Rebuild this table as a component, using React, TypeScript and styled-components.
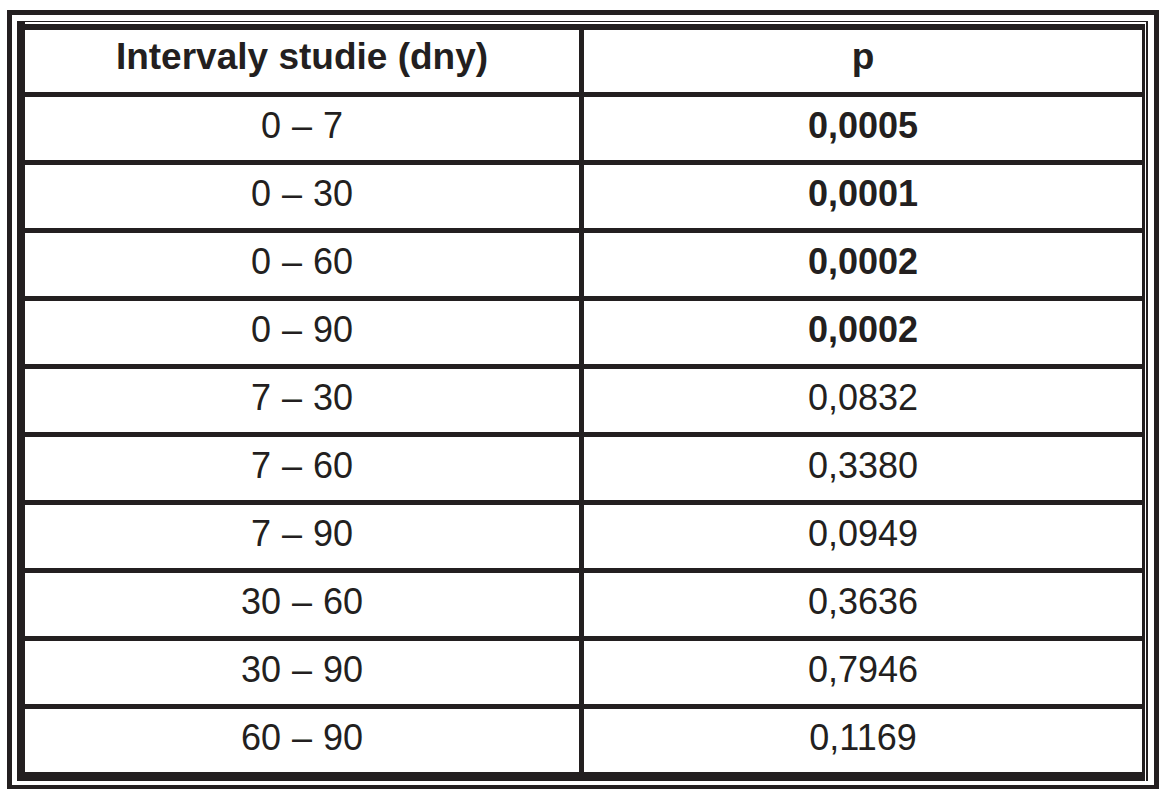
import React from "react";
import styled, { createGlobalStyle } from "styled-components";

const Global = createGlobalStyle`
  html, body {
    margin: 0;
    padding: 0;
    background: #ffffff;
  }
  body {
    font-family: "Liberation Sans", Arial, sans-serif;
  }
`;

const INK = "#231f20";

const Frame = styled.div`
  box-sizing: border-box;
  margin: 10px 0 0 7px;
  width: 1152px;
  border: 5px solid ${INK};
  border-bottom-width: 4px;
  padding: 6px 6px 4px 5px;
  background: #fff;
`;

const Inner = styled.div`
  border-top: 1px solid ${INK};
  border-left: 8px solid ${INK};
  border-right: 2px solid ${INK};
  padding: 2px 1px 0 0;
`;

const Table = styled.div`
  display: grid;
  grid-template-columns: 554px 558px;
  grid-template-rows: 62px repeat(10, 63px);
  gap: 5px;
  background: ${INK};
  border-top: 6px solid ${INK};
  border-right: 3px solid ${INK};
  border-bottom: 9px solid ${INK};
`;

const Cell = styled.div<{ $bold?: boolean; $head?: boolean }>`
  background: #fff;
  display: flex;
  align-items: center;
  justify-content: center;
  font-family: "Liberation Sans", Arial, sans-serif;
  font-size: ${(p) => (p.$head ? "37px" : "36px")};
  font-weight: ${(p) => (p.$bold ? 700 : 400)};
  word-spacing: ${(p) => (p.$head ? "0" : "1px")};
  color: ${INK};
  padding-bottom: ${(p) => (p.$head ? "9px" : "6px")};
  box-sizing: border-box;
  white-space: nowrap;
`;

const rows: [string, string, boolean][] = [
  ["0 – 7", "0,0005", true],
  ["0 – 30", "0,0001", true],
  ["0 – 60", "0,0002", true],
  ["0 – 90", "0,0002", true],
  ["7 – 30", "0,0832", false],
  ["7 – 60", "0,3380", false],
  ["7 – 90", "0,0949", false],
  ["30 – 60", "0,3636", false],
  ["30 – 90", "0,7946", false],
  ["60 – 90", "0,1169", false],
];

export default function App() {
  return (
    <>
      <Global />
      <Frame>
        <Inner>
          <Table>
            <Cell $head $bold>Intervaly studie (dny)</Cell>
            <Cell $head $bold>p</Cell>
            {rows.map(([a, b, bold]) => (
              <React.Fragment key={a}>
                <Cell>{a}</Cell>
                <Cell $bold={bold}>{b}</Cell>
              </React.Fragment>
            ))}
          </Table>
        </Inner>
      </Frame>
    </>
  );
}
